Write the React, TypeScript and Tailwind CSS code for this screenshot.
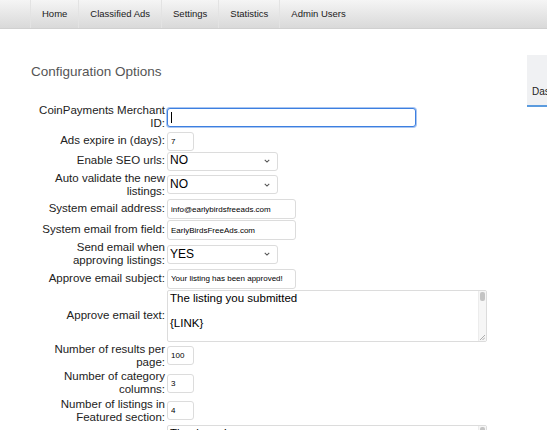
import React from 'react';

const navItems = ['Home', 'Classified Ads', 'Settings', 'Statistics', 'Admin Users'];

const inputCls =
  'block h-[19px] border border-[#dcdcdc] rounded-[3px] bg-white px-[3px] text-[8px] text-black outline-none';

const Chevron = () => (
  <svg className="absolute right-[7px] top-1/2 -translate-y-1/2 w-[6px] h-[4px]" viewBox="0 0 8 5" fill="none">
    <path d="M1 1l3 3 3-3" stroke="#555" strokeWidth="1.4" />
  </svg>
);

const Select = ({ value }: { value: string }) => (
  <div className="relative w-[111px] h-[19px] border border-[#dcdcdc] rounded-[3px] bg-white flex items-center pl-[2px] text-[12px] text-black">
    {value}
    <Chevron />
  </div>
);

// textarea with the thin scrollbar and resize grip drawn over it
const TextArea = ({ text }: { text: string }) => (
  <div className="relative w-[320px] h-[52px]">
    <textarea
      readOnly
      defaultValue={text}
      className="block w-full h-full border border-[#dcdcdc] rounded-[2px] bg-white pl-[2px] pr-[12px] pt-[1px] text-[11.5px] leading-[12.5px] text-black outline-none resize-none overflow-hidden"
    />
    <div className="absolute right-px top-px bottom-px w-[8px] bg-[#f6f6f6] border-l border-[#ececec]">
      <div className="mt-px mx-auto w-[5px] h-[9px] rounded-[2px] bg-[#c4c4c4]" />
    </div>
    <svg className="absolute right-[2px] bottom-[2px] w-[5px] h-[5px]" viewBox="0 0 5 5">
      <path d="M5 0L0 5M5 2.5L2.5 5" stroke="#9a9a9a" strokeWidth="0.8" />
    </svg>
  </div>
);

type Row = { label: string; field: React.ReactNode };

const rows: Row[] = [
  {
    label: 'CoinPayments Merchant ID:',
    field: (
      <div className="w-[249px] h-[19px] border border-[#3d7fe0] rounded-[3px] bg-white shadow-[0_0_0_1px_#a9c6f2] flex items-center pl-[3px]">
        <span className="w-px h-[11px] bg-black" />
      </div>
    ),
  },
  { label: 'Ads expire in (days):', field: <input readOnly defaultValue="7" className={`${inputCls} w-[27px]`} /> },
  { label: 'Enable SEO urls:', field: <Select value="NO" /> },
  { label: 'Auto validate the new listings:', field: <Select value="NO" /> },
  {
    label: 'System email address:',
    field: <input readOnly defaultValue="info@earlybirdsfreeads.com" className={`${inputCls} w-[129px] h-[20px]`} />,
  },
  {
    label: 'System email from field:',
    field: <input readOnly defaultValue="EarlyBirdsFreeAds.com" className={`${inputCls} w-[129px] h-[20px]`} />,
  },
  { label: 'Send email when approving listings:', field: <Select value="YES" /> },
  {
    label: 'Approve email subject:',
    field: <input readOnly defaultValue="Your listing has been approved!" className={`${inputCls} w-[129px] h-[20px]`} />,
  },
  {
    label: 'Approve email text:',
    field: <TextArea text={'The listing you submitted\n\n{LINK}\n\nhas been approved.'} />,
  },
  { label: 'Number of results per page:', field: <input readOnly defaultValue="100" className={`${inputCls} w-[27px]`} /> },
  { label: 'Number of category columns:', field: <input readOnly defaultValue="3" className={`${inputCls} w-[27px]`} /> },
  {
    label: 'Number of listings in Featured section:',
    field: <input readOnly defaultValue="4" className={`${inputCls} w-[27px]`} />,
  },
  { label: '', field: <TextArea text={'Thank you!'} /> },
];

export default function App() {
  return (
    <div className="w-[547px] h-[430px] overflow-hidden bg-white font-['Liberation_Sans',Arial,sans-serif] text-[#222]">
      {/* top navigation */}
      <nav className="h-[29px] bg-gradient-to-b from-[#f5f5f5] to-[#d9d9d9] border-b border-[#d0d0d0] pl-[30px] flex">
        {navItems.map((item) => (
          <div key={item} className="h-full flex items-center px-[11px] border-l border-[#e3e3e3] text-[9.5px] text-[#1a1a1a]">
            {item}
          </div>
        ))}
      </nav>

      <div className="relative">
        {/* side tab, cut off at the right edge */}
        <div className="absolute left-[527px] top-[26px] w-[40px] h-[52px] bg-[#f0f1f3] border-b-2 border-[#5b9bde] flex items-end pb-[6px] pl-[5px] text-[10px] text-[#222] whitespace-nowrap overflow-hidden">
          Dashboard
        </div>

        <h1 className="pl-[31px] pt-[34px] text-[13.5px] text-[#555] leading-[18px]">Configuration Options</h1>

        <table className="ml-[37px] mt-[22px] border-separate border-spacing-y-px border-spacing-x-0 text-[11.5px] leading-[13.25px] text-[#222]">
          <tbody>
            {rows.map((r, i) => (
              <tr key={i}>
                <td className="w-[130px] text-right align-middle pr-[2px] p-0">{r.label}</td>
                <td className="align-middle p-0">{r.field}</td>
              </tr>
            ))}
          </tbody>
        </table>
      </div>
    </div>
  );
}
